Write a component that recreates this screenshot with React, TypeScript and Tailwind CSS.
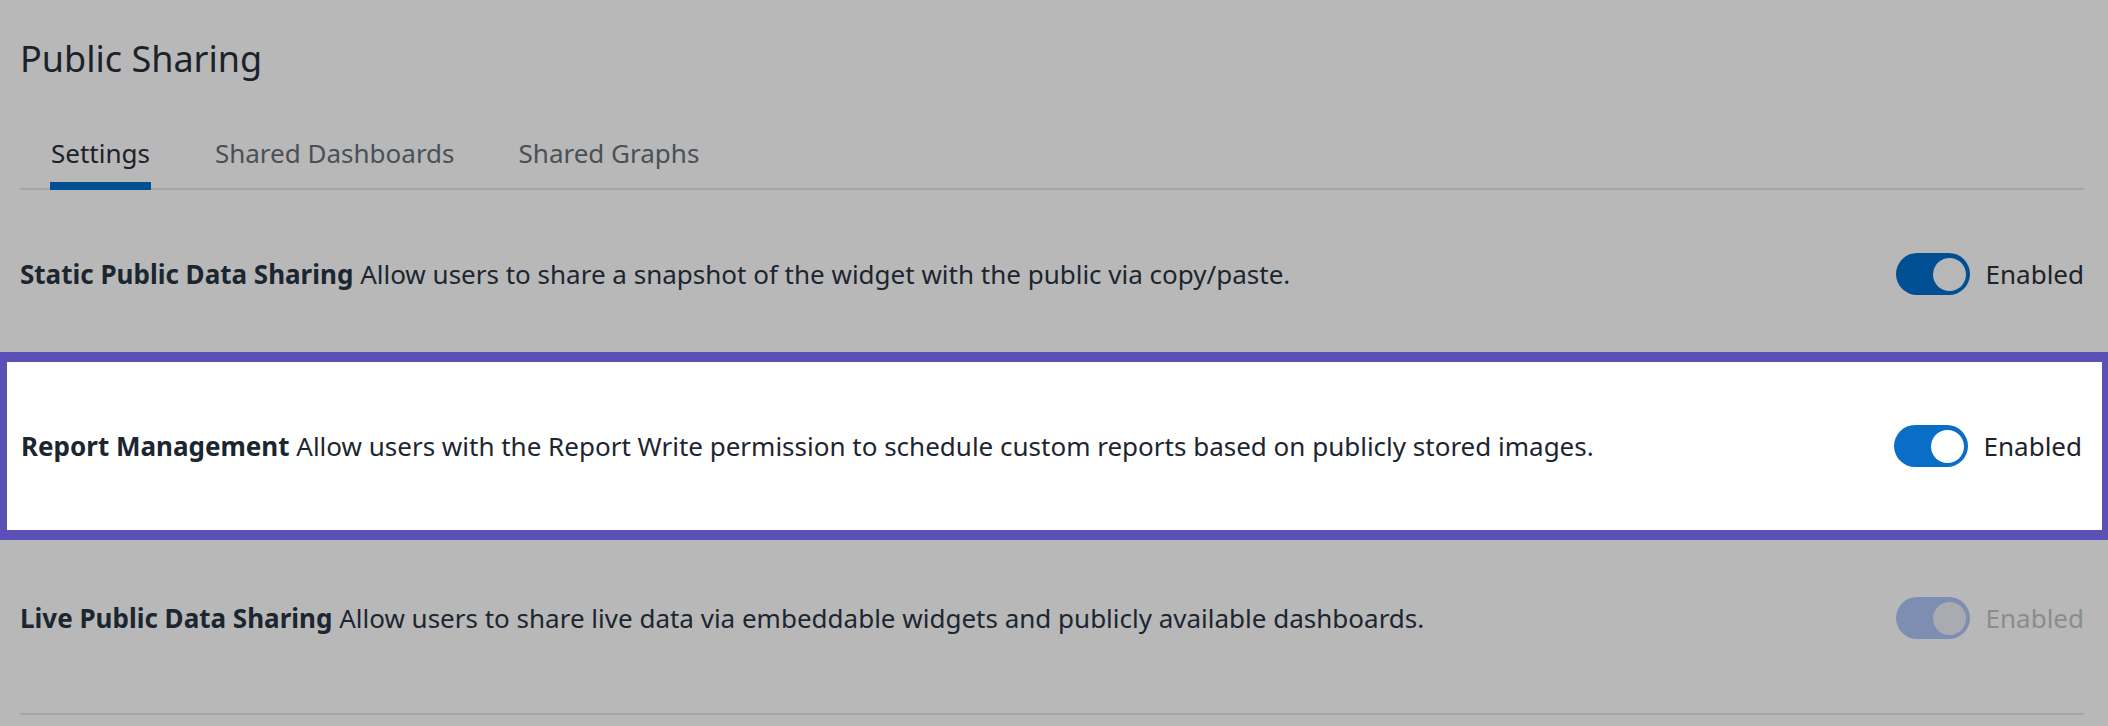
import React from "react";

type Tone = "dim" | "active" | "disabled";

function Toggle({ tone }: { tone: Tone }) {
  const track =
    tone === "active"
      ? "bg-[#0a6ec6]"
      : tone === "dim"
        ? "bg-[#004f93]"
        : "bg-[#7e8db2]";
  const knob =
    tone === "active"
      ? "bg-white"
      : tone === "dim"
        ? "bg-[#b7b7b7]"
        : "bg-[#a9abb0]";
  return (
    <div className={`w-[74px] h-[42px] rounded-full ${track} flex items-center justify-end pr-[4px] shrink-0`}>
      <div className={`w-[33px] h-[33px] rounded-full ${knob}`} />
    </div>
  );
}

function SettingRow({
  title,
  text,
  tone,
}: {
  title: string;
  text: string;
  tone: Tone;
}) {
  return (
    <div className="flex items-center justify-between">
      <p className="text-[26px] leading-[34px] text-[#1c2630]">
        <span className="font-bold">{title}</span> {text}
      </p>
      <div className="flex items-center gap-[16px]">
        <Toggle tone={tone} />
        <span
          className={`text-[26px] leading-[34px] ${
            tone === "disabled" ? "text-[#8b8c8d]" : "text-[#1c2329]"
          }`}
        >
          Enabled
        </span>
      </div>
    </div>
  );
}

export default function App() {
  const tabs = ["Settings", "Shared Dashboards", "Shared Graphs"];

  return (
    <div
      className="w-[2108px] h-[726px] bg-[#b8b8b8] overflow-hidden"
      style={{ fontFamily: '"Noto Sans", "Open Sans", sans-serif' }}
    >
      {/* Header */}
      <div className="pl-[20px] pr-[24px] pt-[35px]">
        <h1 className="text-[36px] leading-[48px] text-[#1b2229]">Public Sharing</h1>

        {/* Tabs */}
        <div className="mt-[52px] flex gap-[64px] pl-[30px] border-b-2 border-[#a4a7a9]">
          {tabs.map((t, i) => (
            <div
              key={t}
              className={`text-[26px] leading-[36px] pb-[11px] -mb-[2px] border-b-[8px] ${
                i === 0
                  ? "text-[#1b2229] border-[#004f93] px-[1px]"
                  : "text-[#4a5057] border-transparent"
              }`}
            >
              {t}
            </div>
          ))}
        </div>
      </div>

      {/* Static */}
      <div className="pl-[20px] pr-[24px] pt-[63px] pb-[57px]">
        <SettingRow
          title="Static Public Data Sharing"
          text="Allow users to share a snapshot of the widget with the public via copy/paste."
          tone="dim"
        />
      </div>

      {/* Highlighted */}
      <div className="bg-white border-[#5b50b6] border-t-[10px] border-b-[10px] border-l-[7px] border-r-[6px] pl-[14px] pr-[20px] pt-[63px] pb-[63px]">
        <SettingRow
          title="Report Management"
          text="Allow users with the Report Write permission to schedule custom reports based on publicly stored images."
          tone="active"
        />
      </div>

      {/* Live */}
      <div className="ml-[20px] mr-[24px] pt-[57px] pb-[74px] border-b-2 border-[#a4a7a9]">
        <SettingRow
          title="Live Public Data Sharing"
          text="Allow users to share live data via embeddable widgets and publicly available dashboards."
          tone="disabled"
        />
      </div>
    </div>
  );
}
